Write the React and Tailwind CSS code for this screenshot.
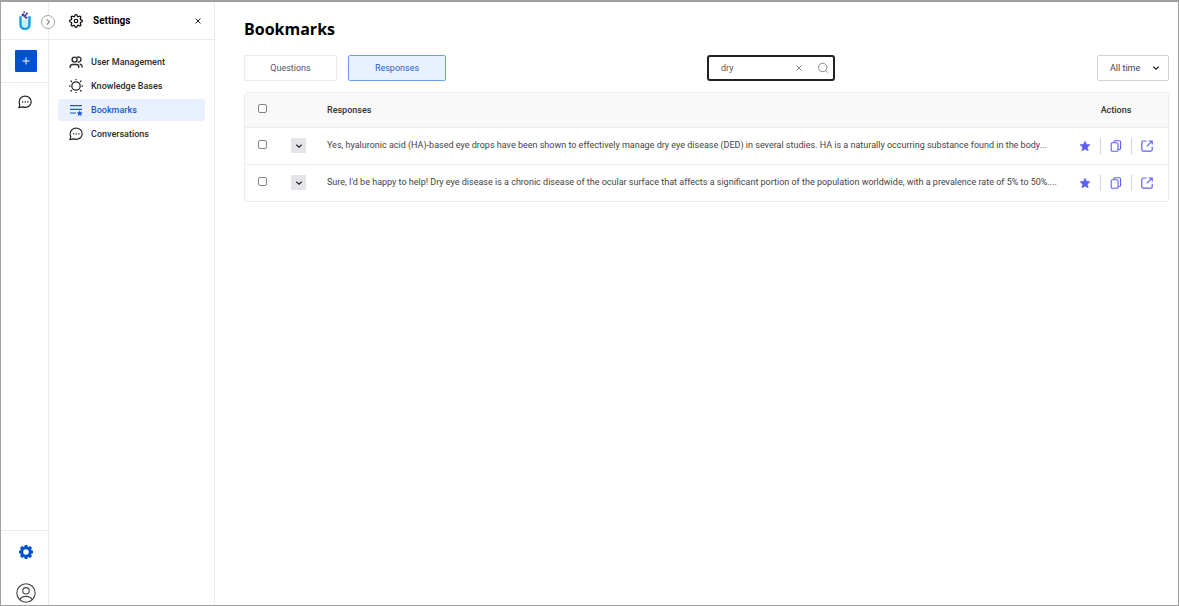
import { useState } from "react";
import { FiSettings } from "react-icons/fi";

const navItems = [
  { label: "User Management", icon: UsersIcon },
  { label: "Knowledge Bases", icon: KnowledgeIcon },
  { label: "Bookmarks", icon: BookmarksIcon, active: true },
  { label: "Conversations", icon: ChatIcon },
];

const responses = [
  "Yes, hyaluronic acid (HA)-based eye drops have been shown to effectively manage dry eye disease (DED) in several studies. HA is a naturally occurring substance found in the body...",
  "Sure, I'd be happy to help! Dry eye disease is a chronic disease of the ocular surface that affects a significant portion of the population worldwide, with a prevalence rate of 5% to 50%....",
];

function UsersIcon() {
  return (
    <svg viewBox="0 0 14 14" className="size-3.5" fill="none" stroke="currentColor" strokeWidth="1.4" strokeLinecap="round" strokeLinejoin="round" aria-hidden="true">
      <circle cx="5.6" cy="4.6" r="2.5" />
      <path d="M1.200 12.400v-.7c0-1.400 1.100-2.200 2.400-2.200h3.800c1.300 0 2.400.8 2.400 2.200v.7" />
      <path d="M8.600 2.200a2.500 2.500 0 1 1 .6 4.800M11.200 9.200c1.200.2 1.900 1 1.900 2.200v.6" />
    </svg>
  );
}

function KnowledgeIcon() {
  return (
    <svg viewBox="0 0 14 14" className="size-3.5" fill="none" stroke="currentColor" strokeWidth="1.3" strokeLinecap="round" aria-hidden="true">
      <circle cx="7" cy="7" r="4.200" />
      <path d="M.4 7h.5M13.100 7h.5M2 2l.5.500M12 2l-.5.500M2 12l.5-.5M12 12l-.5-.5M7 .4v.3M7 13.300v.3" />
    </svg>
  );
}

function BookmarksIcon() {
  return (
    <svg viewBox="0 0 14 14" className="size-3.5" fill="none" stroke="currentColor" strokeWidth="1.2" aria-hidden="true">
      <path d="M1 2.600h12M1 6.300h12M1 10h6" />
      <path d="m10.700 7.300 1 1.900 2 .3-1.500 1.400.4 2-1.900-.9-1.900.9.400-2-1.500-1.400 2-.3z" fill="currentColor" stroke="none" />
    </svg>
  );
}

function ChatIcon() {
  return (
    <svg viewBox="0 0 14 14" className="size-3.5" fill="none" stroke="currentColor" strokeWidth="1.2" strokeLinejoin="round" aria-hidden="true">
      <path d="M7.200 1.200c3.400 0 6 2.400 6 5.600s-2.600 5.600-6 5.600c-.9 0-1.800-.2-2.600-.5L.9 12.700l.9-3A5.200 5.200 0 0 1 1.200 6.800c0-3.200 2.600-5.600 6-5.600z" />
      <path d="M4 6.900h1.300M6.600 6.900h1.300M9.200 6.900h1.300" strokeWidth="1.400" />
    </svg>
  );
}

function GearSolidIcon() {
  return (
    <svg viewBox="0 0 14 14" className="size-3.5" fill="currentColor" fillRule="evenodd" aria-hidden="true">
      <path d="M5.700 0h2.600l.4 1.700.7.200 1.700-.9 1.900 1.900-.9 1.700.2.700L14 5.700v2.600l-1.700.4-.2.7.9 1.700-1.900 1.900-1.700-.9-.7.200L8.300 14H5.700l-.4-1.700-.7-.2-1.700.9L1 11.100l.9-1.700-.2-.7L0 8.300V5.700l1.700-.4.2-.7L1 2.900 2.900 1l1.700.9.700-.2zM7 4.200a2.800 2.800 0 1 0 0 5.600 2.800 2.800 0 0 0 0-5.600z" />
    </svg>
  );
}

function UserIcon() {
  return (
    <svg viewBox="0 0 20 20" className="size-5" fill="none" stroke="currentColor" strokeWidth="1.100" aria-hidden="true">
      <circle cx="10" cy="10" r="9.200" />
      <circle cx="10" cy="7.800" r="3.200" />
      <path d="M3.800 16.700c1-2.200 3.300-3.300 6.200-3.300s5.200 1.100 6.200 3.300" />
    </svg>
  );
}

function Logo() {
  return (
    <svg viewBox="0 0 14 20" className="h-5 w-3.5" fill="none" role="img" aria-label="Home">
      <path d="M3.500 8.500v5a3.500 3.500 0 0 0 7 0v-5z" fill="#c9ecfa" />
      <path d="M2.500 5.200v8.200a4.500 4.500 0 0 0 9 0V5.200" stroke="#0f9ddb" strokeWidth="2.400" />
      <circle cx="6.200" cy="1.200" r=".9" fill="#443a99" />
      <circle cx="8.800" cy="2.600" r="1.100" fill="#443a99" />
      <circle cx="5" cy="4" r="1.400" fill="#443a99" />
      <path d="m4.800 4.800 3.600-2 .4 1.500-1.600 1 1.600 1.500-1.300.8z" fill="#443a99" />
      <circle cx="8.300" cy="6.600" r="1.200" fill="#443a99" />
    </svg>
  );
}

function XIcon() {
  return (
    <svg viewBox="0 0 8 8" className="size-2" fill="none" stroke="currentColor" aria-hidden="true">
      <path d="m1.500 1.500 5 5m0-5-5 5" />
    </svg>
  );
}

function ChevronIcon() {
  return (
    <svg viewBox="0 0 8 8" className="size-2" fill="none" stroke="currentColor" strokeWidth="1.200" aria-hidden="true">
      <path d="m1.300 2.800 2.700 2.500 2.700-2.500" />
    </svg>
  );
}

function StarIcon() {
  return (
    <svg viewBox="0 0 12 12" className="size-3" fill="currentColor" aria-hidden="true">
      <path d="m6 .9 1.500 3.300 3.700.4-2.700 2.600.7 3.700L6 9.200l-3.200 1.700.7-3.700L.8 4.600l3.700-.4z" stroke="currentColor" strokeWidth=".4" strokeLinejoin="round" />
    </svg>
  );
}

function CopyIcon() {
  return (
    <svg viewBox="0 0 12 12" className="size-3" fill="none" stroke="currentColor" strokeWidth="1.100" aria-hidden="true">
      <rect x="1.200" y="2.700" width="6.800" height="8.500" rx="1.300" />
      <path d="M3.800 2.500V2c0-.7.400-1.200 1.100-1.200h4.400c.7 0 1.300.5 1.300 1.200v6.300c0 .7-.5 1.200-1.200 1.200H8.200" />
    </svg>
  );
}

function OpenIcon() {
  return (
    <svg viewBox="0 0 12 12" className="size-3" fill="none" stroke="currentColor" strokeWidth="1.200" aria-hidden="true">
      <path d="M5.500 1H2.300C1.400 1 .8 1.600.8 2.500v7.200c0 .9.600 1.500 1.500 1.500h7.400c.9 0 1.500-.6 1.500-1.500V6.800M7.600 1h3.600v3.500M11 1.200 5.800 6.400" />
    </svg>
  );
}

function Checkbox({ label }) {
  return (
    <input
      type="checkbox"
      aria-label={label}
      className="block size-[9px] appearance-none rounded-[2px] border border-[#858585] bg-white checked:bg-[#0052cc]"
    />
  );
}

function Rail() {
  return (
    <aside className="flex w-12 shrink-0 flex-col border-r border-[#ececec]">
      <div className="relative flex h-[38px] items-center justify-center border-b border-[#ececec]">
        <a href="#home"><Logo /></a>
        <button
          aria-label="Expand sidebar"
          className="absolute top-[13px] -right-[7px] flex size-3.5 items-center justify-center rounded-full border border-[#a3a3a3] bg-white text-[#888]"
        >
          <span className="-rotate-90"><ChevronIcon /></span>
        </button>
      </div>
      <div className="flex h-[43px] items-center justify-center border-b border-[#ececec] pl-[3px]">
        <button aria-label="New conversation" className="flex size-[22px] items-center justify-center rounded-[1px] bg-[#0052cc] text-white">
          <svg viewBox="0 0 8 8" className="size-2" stroke="currentColor" aria-hidden="true"><path d="M4 .5v7M.5 4h7" /></svg>
        </button>
      </div>
      <a href="#conversations" aria-label="Conversations" className="mt-3 flex justify-center text-[#222]"><ChatIcon /></a>
      <div className="mt-auto flex flex-col items-center gap-6 border-t border-[#ececec] pt-3.5 pb-[2px] pl-[3px]">
        <a href="#settings" aria-label="Settings" className="text-[#0052cc]"><GearSolidIcon /></a>
        <a href="#profile" aria-label="Profile" className="text-[#444]"><UserIcon /></a>
      </div>
    </aside>
  );
}

function SettingsPanel() {
  return (
    <aside className="w-[166px] shrink-0 border-r border-[#ececec]">
      <div className="flex h-[38px] items-center border-b border-[#ececec] pr-3 pl-5 text-black">
        <FiSettings className="size-3.5" aria-hidden="true" />
        <h2 className="ml-2.5 text-[10px] font-bold">Settings</h2>
        <button aria-label="Close settings" className="ml-auto text-[#222]"><XIcon /></button>
      </div>
      <nav className="flex flex-col gap-[2px] px-[9px] pt-[11px]">
        {navItems.map(({ label, icon: Icon, active }) => (
          <a
            key={label}
            href="#settings"
            className={`flex h-[22px] items-center gap-2 rounded-[2px] pl-[11px] text-[9px] font-medium ${active ? "bg-[#e9f1ff] text-[#1f57cd]" : "text-[#2c2c2c]"}`}
          >
            <Icon />
            {label}
          </a>
        ))}
      </nav>
    </aside>
  );
}

function Toolbar() {
  const [query, setQuery] = useState("dry");
  return (
    <div className="mt-[13px] flex h-[26px] items-stretch text-[9px]">
      <button className="w-[93px] border border-[#ececec] text-[#555]">Questions</button>
      <button className="ml-[11px] w-[98px] rounded-[2px] border border-[#6b9ae8] bg-[#e9f1ff] text-[#2a5fd0]">Responses</button>
      <div className="mr-[262px] ml-auto flex w-32 items-center rounded-[3px] border-2 border-[#222] pr-1 pl-3">
        <input
          aria-label="Search bookmarks"
          value={query}
          onChange={(event) => setQuery(event.target.value)}
          className="min-w-0 flex-1 bg-transparent text-[#555] outline-none"
        />
        <button aria-label="Clear search" onClick={() => setQuery("")} className="mr-3.5 text-[#888]"><XIcon /></button>
        <button aria-label="Search" className="text-[#888]">
          <svg viewBox="0 0 12 12" className="size-3" fill="none" stroke="currentColor" aria-hidden="true">
            <circle cx="5.700" cy="5.500" r="4.200" />
            <path d="m8.700 8.500 2.200 2.200" />
          </svg>
        </button>
      </div>
      <div className="relative">
        <select aria-label="Time range" className="h-full w-[72px] appearance-none rounded-[2px] border border-[#d4d4d4] bg-white pl-3 text-[#444]">
          <option>All time</option>
          <option>Last week</option>
          <option>Last month</option>
        </select>
        <span className="pointer-events-none absolute top-[9px] right-[9px] text-[#222]"><ChevronIcon /></span>
      </div>
    </div>
  );
}

function ResponsesTable() {
  return (
    <div className="mt-[11px] overflow-hidden rounded-[3px] border border-[#ececec]">
      <table className="w-full table-fixed text-left text-[9px]">
        <colgroup>
          <col className="w-[46px]" />
          <col className="w-9" />
          <col />
          <col className="w-[104px]" />
        </colgroup>
        <thead className="bg-[#f9f9f9] text-[#333]">
          <tr className="h-[34px]">
            <th className="pb-[3px] pl-[13px]"><Checkbox label="Select all responses" /></th>
            <th aria-label="Expand" />
            <th className="font-medium">Responses</th>
            <th className="text-center font-medium">Actions</th>
          </tr>
        </thead>
        <tbody className="text-[#444]">
          {responses.map((text, index) => (
            <tr key={text} className="h-[37px] border-t border-[#ececec]">
              <td className="pb-[3px] pl-[13px]"><Checkbox label={`Select response ${index + 1}`} /></td>
              <td>
                <button aria-label="Show full response" className="flex size-[15px] items-center justify-center bg-[#e4e5ea] text-[#222]"><ChevronIcon /></button>
              </td>
              <td className="pb-[2px] whitespace-nowrap">{text}</td>
              <td>
                <div className="flex items-center justify-center text-[#5d5fef]">
                  <button aria-label="Remove bookmark"><StarIcon /></button>
                  <span className="mx-[9px] h-4 w-px bg-[#d4d4d4]" />
                  <button aria-label="Copy response"><CopyIcon /></button>
                  <span className="mx-[9px] h-4 w-px bg-[#d4d4d4]" />
                  <button aria-label="Open conversation"><OpenIcon /></button>
                </div>
              </td>
            </tr>
          ))}
        </tbody>
      </table>
    </div>
  );
}

export default function App() {
  return (
    <div className="flex min-h-screen border border-t-2 border-[#a0a0a0] bg-white font-['Roboto',sans-serif] leading-[14px]">
      <Rail />
      <SettingsPanel />
      <main className="min-w-0 flex-1 pt-[15px] pr-[9px] pl-[29px]">
        <h1 className="font-['Open_Sans',sans-serif] text-[16px] leading-[25px] font-bold text-black">Bookmarks</h1>
        <Toolbar />
        <ResponsesTable />
      </main>
    </div>
  );
}
